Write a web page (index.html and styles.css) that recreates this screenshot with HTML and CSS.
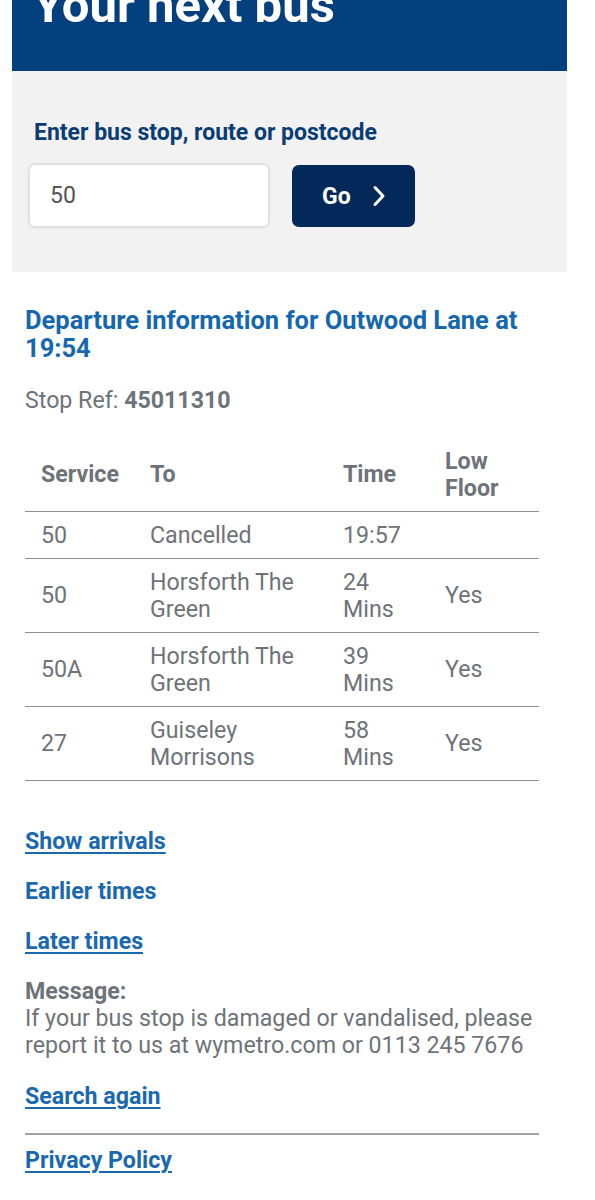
FILE: index.html
```html
<!DOCTYPE html>
<html lang="en">
<head>
<meta charset="utf-8">
<title>Your next bus</title>
<link rel="stylesheet" href="styles.css">
</head>
<body>
<header class="hero">
  <h1 class="hero-title">Your next bus</h1>
</header>
<section class="search">
  <label class="search-label" for="q">Enter bus stop, route or postcode</label>
  <div class="search-row">
    <div class="search-input"><input id="q" type="text" value="50"></div>
    <button class="go-btn" type="button"><span>Go</span>
      <svg class="chev" width="16" height="24" viewBox="0 0 16 24"><path d="M4 3.5 L12 12 L4 20.5" fill="none" stroke="#fff" stroke-width="3" stroke-linecap="round" stroke-linejoin="round"/></svg>
    </button>
  </div>
</section>
<main class="content">
  <h2 class="dep-title">Departure information for Outwood Lane at 19:54</h2>
  <p class="stopref">Stop Ref: <strong>45011310</strong></p>
  <table class="times">
    <colgroup><col class="c1"><col class="c2"><col class="c3"><col class="c4"></colgroup>
    <thead>
      <tr><th>Service</th><th>To</th><th>Time</th><th>Low Floor</th></tr>
    </thead>
    <tbody>
      <tr><td>50</td><td>Cancelled</td><td>19:57</td><td></td></tr>
      <tr><td>50</td><td>Horsforth The Green</td><td>24 Mins</td><td>Yes</td></tr>
      <tr><td>50A</td><td>Horsforth The Green</td><td>39 Mins</td><td>Yes</td></tr>
      <tr><td>27</td><td>Guiseley Morrisons</td><td>58 Mins</td><td>Yes</td></tr>
    </tbody>
  </table>
  <p class="link-line first"><a class="link ul" href="#">Show arrivals</a></p>
  <p class="link-line"><a class="link" href="#">Earlier times</a></p>
  <p class="link-line"><a class="link ul" href="#">Later times</a></p>
  <div class="message">
    <strong class="msg-head">Message:</strong>
    <p class="msg-body">If your bus stop is damaged or vandalised, please report it to us at wymetro.com or 0113 245 7676</p>
  </div>
  <p class="link-line search-again"><a class="link ul" href="#">Search again</a></p>
  <hr class="rule">
  <p class="link-line privacy"><a class="link ul" href="#">Privacy Policy</a></p>
</main>
</body>
</html>
```
FILE: styles.css
```css
* { box-sizing: border-box; }
html, body { margin: 0; padding: 0; background: #fff; }
body {
  font-family: Roboto, "Liberation Sans", sans-serif;
  font-size: 23.2px;
  line-height: 27px;
  color: #6e7379;
}
.hero {
  margin-left: 12px;
  width: 555px;
  height: 71px;
  background: #05407e;
  overflow: hidden;
  padding-left: 21px;
}
.hero-title {
  margin: -18px 0 0;
  font-size: 49px;
  line-height: 48px;
  font-weight: 700;
  color: #fff;
}
.search {
  margin-left: 12px;
  width: 555px;
  background: #f2f2f2;
  padding: 48px 18px 45px 18px;
}
.search-label {
  display: block;
  padding-left: 4px;
  font-size: 23px;
  line-height: 28px;
  font-weight: 700;
  color: #0a3c75;
}
.search-row {
  display: flex;
  gap: 24px;
  margin-top: 18px;
}
.search-input {
  width: 238px;
  height: 61px;
  background: #fff;
  border-radius: 5px;
  box-shadow: 0 0 0 2px #e2e2e2, 0 1px 4px rgba(0,0,0,0.12);
}
.search-input input {
  width: 100%;
  height: 100%;
  border: 0;
  outline: 0;
  background: transparent;
  padding: 0 0 0 20px;
  font-family: inherit;
  font-size: 23px;
  color: #555;
}
.go-btn {
  width: 123px;
  height: 62px;
  border: 0;
  border-radius: 7px;
  background: #03295a;
  color: #fff;
  font-family: inherit;
  font-size: 23px;
  font-weight: 700;
  display: flex;
  align-items: center;
  padding: 0 0 0 30px;
  gap: 20px;
}
.chev { display: block; }
.content {
  padding-left: 25px;
  width: 539px;
}
.dep-title {
  margin: 34px 0 0;
  font-size: 25.5px;
  line-height: 28px;
  font-weight: 700;
  color: #1568b0;
}
.stopref {
  margin: 25px 0 0;
}
.stopref strong { font-weight: 700; }
.times {
  margin-top: 24px;
  width: 514px;
  border-collapse: collapse;
  table-layout: fixed;
}
.c1 { width: 109px; }
.c2 { width: 193px; }
.c3 { width: 102px; }
.c4 { width: 110px; }
.times th, .times td {
  text-align: left;
  vertical-align: middle;
  padding: 9.5px 16px;
  border-bottom: 1px solid #8d9094;
  font-size: 23.2px;
  line-height: 27px;
  color: #6e7379;
}
.times th { font-weight: 700; }
.times td { font-weight: 400; }
.link-line { margin: 23px 0 0; }
.link-line.first { margin-top: 47px; }
.link {
  color: #1a69b0;
  font-weight: 700;
  text-decoration: none;
}
.link.ul {
  text-decoration: underline;
  text-decoration-thickness: 2px;
  text-underline-offset: 3px;
}
.message { margin-top: 23px; }
.msg-head { display: block; font-weight: 700; }
.msg-body { margin: 0; }
.link-line.search-again { margin-top: 24px; }
.rule {
  margin: 23px 0 0;
  width: 514px;
  border: 0;
  border-top: 2px solid #a4a4a4;
}
.link-line.privacy { margin-top: 12px; }
```
